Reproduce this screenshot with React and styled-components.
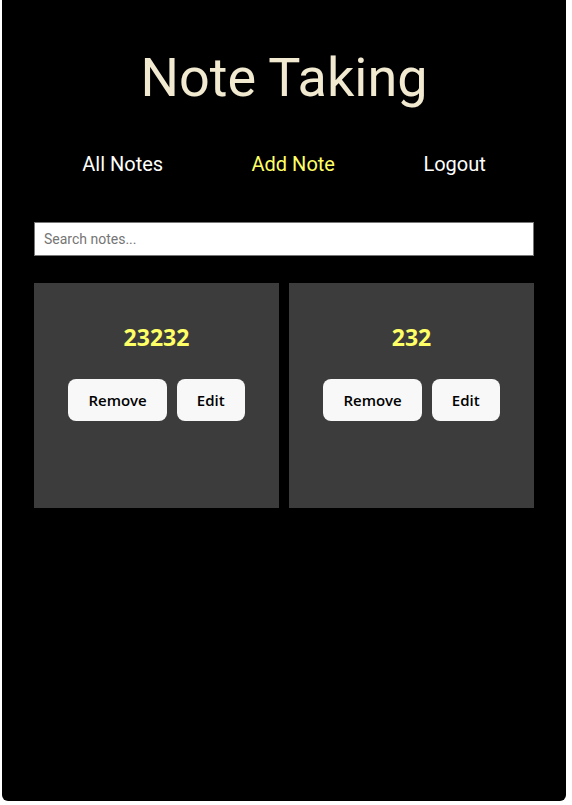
import React, { useState } from 'react';
import styled, { createGlobalStyle } from 'styled-components';

const GlobalStyle = createGlobalStyle`
  body {
    margin: 0;
    background: #ffffff;
    font-family: Roboto, "Liberation Sans", sans-serif;
  }
  * {
    box-sizing: border-box;
  }
`;

const Page = styled.div`
  margin: 0 6px 0 2px;
  min-height: 801px;
  background: #000000;
  border-radius: 0 0 6px 6px;
  padding: 46px 32px 40px 32px;
`;

const Title = styled.h1`
  margin: 0;
  font-family: Roboto, sans-serif;
  font-weight: 400;
  font-size: 54px;
  line-height: 63px;
  text-align: center;
  color: #f1ead0;
`;

const Nav = styled.nav`
  display: flex;
  justify-content: space-around;
  margin-top: 44px;
  padding: 0 4px;
`;

const NavLink = styled.a`
  font-family: Roboto, sans-serif;
  font-size: 20px;
  line-height: 23px;
  color: ${(p) => (p.$active ? '#ffff66' : '#ffffff')};
  text-decoration: none;
  cursor: pointer;
`;

const SearchInput = styled.input`
  display: block;
  width: 100%;
  height: 34px;
  margin-top: 46px;
  padding: 0 9px;
  border: 1px solid #767676;
  background: #ffffff;
  font-family: Roboto, sans-serif;
  font-size: 14px;
  color: #222;
  outline: none;

  &::placeholder {
    color: #757575;
  }
`;

const NoteGrid = styled.div`
  display: grid;
  grid-template-columns: 1fr 1fr;
  gap: 10px;
  margin-top: 27px;
`;

const NoteCard = styled.div`
  height: 225px;
  background: #3c3c3c;
  display: flex;
  flex-direction: column;
  align-items: center;
  padding-top: 39px;
`;

const NoteTitle = styled.h2`
  margin: 0;
  font-family: "Open Sans", "Noto Sans", sans-serif;
  font-weight: 700;
  font-size: 23px;
  line-height: 31px;
  color: #ffff66;
`;

const Actions = styled.div`
  display: flex;
  gap: 10px;
  margin-top: 26px;
`;

const ActionButton = styled.button`
  height: 42px;
  padding: 0 20px;
  border: none;
  border-radius: 8px;
  background: #f8f8f8;
  font-family: "Open Sans", "Noto Sans", sans-serif;
  font-weight: 600;
  font-size: 15px;
  color: #000000;
  cursor: pointer;
`;

export default function App() {
  const [search, setSearch] = useState('');
  const notes = [
    { id: 1, title: '23232' },
    { id: 2, title: '232' },
  ];

  const filtered = notes.filter((n) =>
    n.title.toLowerCase().includes(search.toLowerCase())
  );

  return (
    <>
      <GlobalStyle />
      <Page>
        <Title>Note Taking</Title>
        <Nav>
          <NavLink>All Notes</NavLink>
          <NavLink $active>Add Note</NavLink>
          <NavLink>Logout</NavLink>
        </Nav>
        <SearchInput
          type="text"
          placeholder="Search notes..."
          value={search}
          onChange={(e) => setSearch(e.target.value)}
        />
        <NoteGrid>
          {filtered.map((note) => (
            <NoteCard key={note.id}>
              <NoteTitle>{note.title}</NoteTitle>
              <Actions>
                <ActionButton>Remove</ActionButton>
                <ActionButton>Edit</ActionButton>
              </Actions>
            </NoteCard>
          ))}
        </NoteGrid>
      </Page>
    </>
  );
}
